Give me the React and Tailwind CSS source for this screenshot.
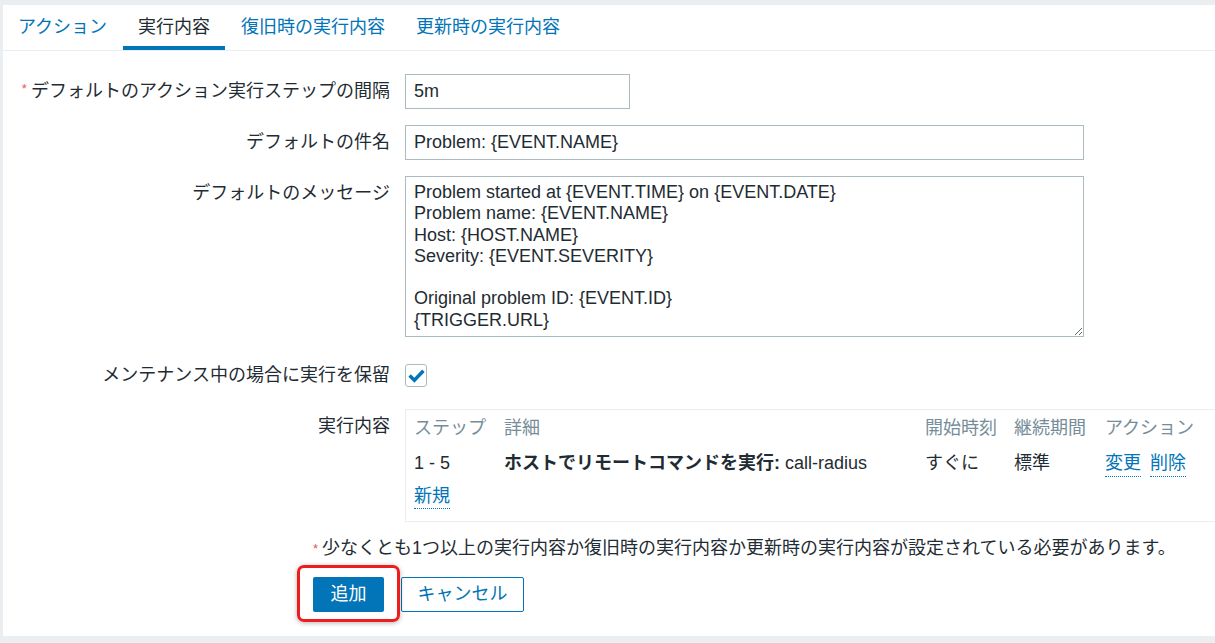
import { useState } from "react";

const tabs = ["アクション", "実行内容", "復旧時の実行内容", "更新時の実行内容"];

const message = `Problem started at {EVENT.TIME} on {EVENT.DATE}
Problem name: {EVENT.NAME}
Host: {HOST.NAME}
Severity: {EVENT.SEVERITY}

Original problem ID: {EVENT.ID}
{TRIGGER.URL}`;

function Label({ children, required }) {
  return (
    <div className="w-[387px] shrink-0 h-[35px] flex items-center justify-end text-right">
      {required && <span className="text-[#e45959] text-[13px] mr-[4px] -mt-[6px]">*</span>}
      {children}
    </div>
  );
}

export default function App() {
  const [active, setActive] = useState(1);
  const [checked, setChecked] = useState(true);

  return (
    <div className="min-h-screen bg-[#ebeef0] pt-[5px] pl-[3px] text-[18px] text-[#1f2c33] font-['Liberation_Sans','Noto_Sans_CJK_JP',sans-serif]">
      <div className="bg-white h-[631px]">
        {/* tabs */}
        <div className="flex gap-px border-b border-[#ebeef0]">
          {tabs.map((t, i) => (
            <button
              key={t}
              onClick={() => setActive(i)}
              className={
                "h-[45px] px-[15px] pt-[3px] flex items-center border-b-4 leading-none " +
                (i === active
                  ? "border-[#0275b8] text-[#1f2c33]"
                  : "border-transparent text-[#0275b8]")
              }
            >
              {t}
            </button>
          ))}
        </div>

        {/* form */}
        <div className="pt-[23px] flex flex-col">
          <div className="flex">
            <Label required>デフォルトのアクション実行ステップの間隔</Label>
            <input
              defaultValue="5m"
              className="ml-[15px] w-[225px] h-[35px] border border-[#acbbc2] px-[8px] outline-none"
            />
          </div>

          <div className="flex mt-[16px]">
            <Label>デフォルトの件名</Label>
            <input
              defaultValue="Problem: {EVENT.NAME}"
              className="ml-[15px] w-[679px] h-[35px] border border-[#acbbc2] px-[8px] outline-none"
            />
          </div>

          <div className="flex mt-[16px]">
            <Label>デフォルトのメッセージ</Label>
            <textarea
              defaultValue={message}
              className="ml-[15px] w-[679px] h-[161px] border border-[#acbbc2] px-[8px] pt-[5px] leading-[21.3px] outline-none"
            />
          </div>

          <div className="flex mt-[21px] items-center">
            <Label>メンテナンス中の場合に実行を保留</Label>
            <button
              onClick={() => setChecked(!checked)}
              className="ml-[15px] w-[22px] h-[23px] border border-[#acbbc2] rounded-[3px] flex items-center justify-center"
            >
              {checked && (
                <svg width="17" height="15" viewBox="0 0 16 14">
                  <path d="M1.5 7 L6 11.5 L14.5 2.5" fill="none" stroke="#0275b8" strokeWidth="3.2" />
                </svg>
              )}
            </button>
          </div>

          <div className="flex mt-[16px]">
            <Label>実行内容</Label>
            <div className="ml-[15px] flex-1 h-[113px] border border-[#ebeef0] border-r-0 pl-[8px] pt-[8px]">
              <div className="grid grid-cols-[90px_421px_89px_91px_1fr] leading-[21px]">
                <div className="text-[#768d99]">ステップ</div>
                <div className="text-[#768d99]">詳細</div>
                <div className="text-[#768d99]">開始時刻</div>
                <div className="text-[#768d99]">継続期間</div>
                <div className="text-[#768d99]">アクション</div>

                <div className="mt-[14px]">1 - 5</div>
                <div className="mt-[14px]">
                  <b>ホストでリモートコマンドを実行:</b> call-radius
                </div>
                <div className="mt-[14px]">すぐに</div>
                <div className="mt-[14px]">標準</div>
                <div className="mt-[14px] flex gap-[9px]">
                  <a className="text-[#0275b8] border-b border-dotted border-[#0275b8] pb-[2px] cursor-pointer">変更</a>
                  <a className="text-[#0275b8] border-b border-dotted border-[#0275b8] pb-[2px] cursor-pointer">削除</a>
                </div>
              </div>
              <div className="mt-[9px] leading-[21px]">
                <a className="text-[#0275b8] border-b border-dotted border-[#0275b8] pb-[2px] cursor-pointer">新規</a>
              </div>
            </div>
          </div>

          <div className="pl-[310px] mt-[16px] leading-[21px]">
            <span className="text-[#e45959] text-[13px] mr-[4px] align-top">*</span>
            少なくとも1つ以上の実行内容か復旧時の実行内容か更新時の実行内容が設定されている必要があります。
          </div>

          <div className="pl-[310px] mt-[18px] flex gap-[17px]">
            <div className="relative">
              <button className="w-[71px] h-[35px] rounded-[2px] bg-[#0275b8] text-white">追加</button>
              <div className="absolute -left-[16px] -top-[12px] w-[103px] h-[57px] border-[3px] border-[#ee1c1c] rounded-[7px] shadow-[0_1px_5px_rgba(0,0,0,0.3)] pointer-events-none" />
            </div>
            <button className="w-[123px] h-[35px] rounded-[2px] border border-[#0275b8] text-[#0275b8] bg-white">キャンセル</button>
          </div>
        </div>
      </div>
    </div>
  );
}
